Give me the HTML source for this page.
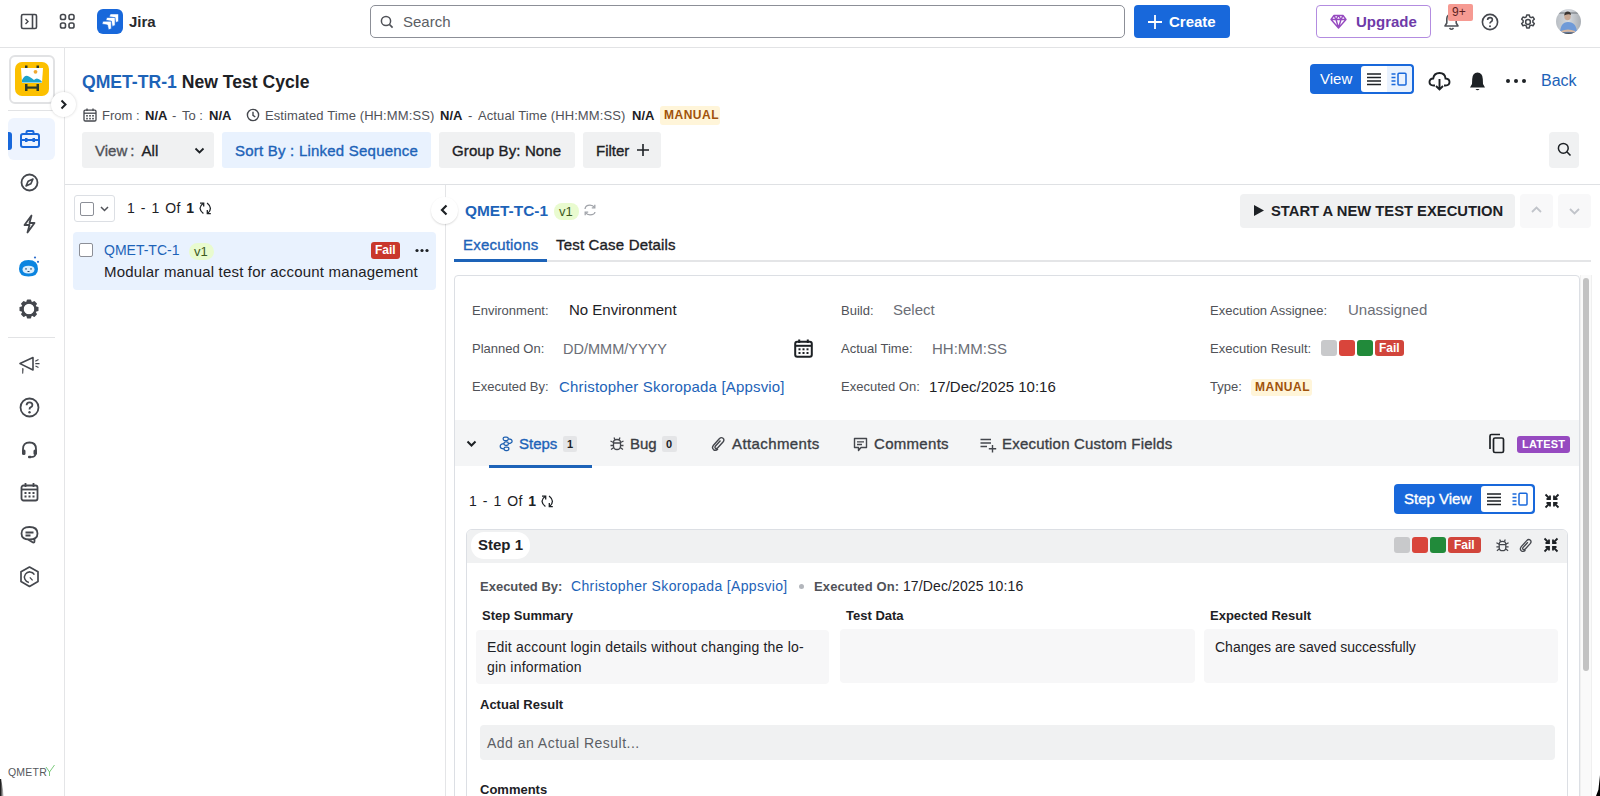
<!DOCTYPE html>
<html><head><meta charset="utf-8">
<style>
*{box-sizing:border-box;margin:0;padding:0}
html,body{width:1600px;height:796px;overflow:hidden;background:#fff;font-family:"Liberation Sans",sans-serif;color:#172b4d}
.a{position:absolute}
.t{position:absolute;white-space:nowrap}
svg{display:block}
.m{-webkit-text-stroke:0.35px currentColor}
</style></head><body>
<!-- TOP BAR -->
<div class="a" style="left:0;top:0;width:1600px;height:48px;background:#fff;border-bottom:1px solid #e2e3e5"></div>


<!-- sidebar toggle icon -->
<svg class="a" style="left:20px;top:13px" width="18" height="17" viewBox="0 0 18 17"><rect x="1.5" y="1.5" width="15" height="14" rx="1.5" fill="none" stroke="#44474d" stroke-width="1.6"/><line x1="12.5" y1="1.5" x2="12.5" y2="15.5" stroke="#44474d" stroke-width="1.6"/><path d="M5.5 6 L8 8.5 L5.5 11" fill="none" stroke="#44474d" stroke-width="1.4"/></svg>
<!-- grid icon -->
<svg class="a" style="left:59px;top:13px" width="17" height="17" viewBox="0 0 17 17"><g fill="none" stroke="#44474d" stroke-width="1.6"><rect x="1.5" y="1.5" width="5" height="5" rx="1.8"/><rect x="10" y="1.5" width="5" height="5" rx="1.8"/><rect x="1.5" y="10" width="5" height="5" rx="1.8"/><rect x="10" y="10" width="5" height="5" rx="1.8"/></g></svg>
<!-- jira logo -->
<div class="a" style="left:97px;top:9px;width:26px;height:25px;border-radius:6px;background:#1868db"></div>
<svg class="a" style="left:97px;top:9px" width="26" height="25" viewBox="0 0 26 25"><g fill="#fff" stroke="#1868db" stroke-width="0.6" stroke-linejoin="miter"><path d="M12.3 7.699999999999999 L13.3 4.9 H21.5 V12.5 L18.700000000000003 13.5 L17.700000000000003 8.7 Z"/><path d="M8.9 11.3 L9.9 8.5 H18.099999999999998 V16.4 L15.299999999999999 17.4 L14.299999999999999 12.3 Z"/><path d="M5 15.0 L6.0 12.2 H14.3 V19.8 L11.5 20.8 L10.5 16.0 Z"/></g></svg>
<div class="t" style="left:129px;top:12px;font-size:15px;font-weight:bold;color:#292a2e;line-height:20px">Jira</div>
<!-- search -->
<div class="a" style="left:370px;top:5px;width:755px;height:33px;border:1px solid #8c8f97;border-radius:5px;background:#fff"></div>
<svg class="a" style="left:380px;top:15px" width="14" height="14" viewBox="0 0 14 14"><circle cx="6" cy="6" r="4.6" fill="none" stroke="#505258" stroke-width="1.5"/><line x1="9.4" y1="9.4" x2="12.6" y2="12.6" stroke="#505258" stroke-width="1.6"/></svg>
<div class="t" style="left:403px;top:12px;font-size:15px;color:#5b5e64;line-height:20px">Search</div>
<!-- create -->
<div class="a" style="left:1134px;top:5px;width:96px;height:33px;border-radius:4px;background:#1868db"></div>
<svg class="a" style="left:1147px;top:14px" width="16" height="16" viewBox="0 0 16 16"><path d="M8 1 V15 M1 8 H15" stroke="#fff" stroke-width="1.8"/></svg>
<div class="t" style="left:1169px;top:12px;font-size:15px;font-weight:bold;color:#fff;line-height:20px">Create</div>
<!-- upgrade -->
<div class="a" style="left:1316px;top:5px;width:115px;height:33px;border:1px solid #b38ce0;border-radius:4px;background:#fff"></div>
<svg class="a" style="left:1330px;top:14px" width="17" height="15" viewBox="0 0 17 15"><path d="M4 1.5 H13 L16 5.5 L8.5 14 L1 5.5 Z M1 5.5 H16 M6 5.5 L8.5 14 L11 5.5 M4 1.5 L6 5.5 L8.5 1.5 L11 5.5 L13 1.5" fill="none" stroke="#964ac0" stroke-width="1.4" stroke-linejoin="round"/></svg>
<div class="t" style="left:1356px;top:12px;font-size:15px;font-weight:bold;color:#6e3aa8;line-height:20px">Upgrade</div>
<!-- bell top -->
<svg class="a" style="left:1443px;top:12px" width="17" height="19" viewBox="0 0 17 19"><path d="M8.5 2 C5.5 2 3.8 4.3 3.8 7 V11 L2 14 H15 L13.2 11 V7 C13.2 4.3 11.5 2 8.5 2 Z M6.5 16 Q8.5 18.5 10.5 16" fill="none" stroke="#505258" stroke-width="1.6" stroke-linejoin="round"/></svg>
<div class="a" style="left:1448px;top:4px;width:25px;height:17px;border-radius:2px;background:#f69a92"></div>
<div class="t" style="left:1452px;top:5px;font-size:12px;color:#5d1f1f;line-height:15px">9+</div>
<!-- help -->
<svg class="a" style="left:1481px;top:13px" width="18" height="18" viewBox="0 0 18 18"><circle cx="9" cy="9" r="7.6" fill="none" stroke="#44474d" stroke-width="1.6"/><path d="M6.6 7 Q6.6 4.6 9 4.6 Q11.4 4.6 11.4 6.8 Q11.4 8.2 9.8 8.9 Q9 9.3 9 10.6" fill="none" stroke="#44474d" stroke-width="1.6"/><circle cx="9" cy="13.2" r="1" fill="#44474d"/></svg>
<!-- settings -->
<svg class="a" style="left:1519px;top:13px" width="18" height="18" viewBox="0 0 24 24"><path fill="none" stroke="#44474d" stroke-width="2" stroke-linejoin="round" d="M10.3 2.5h3.4l.6 2.6 1.9 1.1 2.5-.8 1.7 2.9-1.9 1.8v2.2l1.9 1.8-1.7 2.9-2.5-.8-1.9 1.1-.6 2.6h-3.4l-.6-2.6-1.9-1.1-2.5.8-1.7-2.9 1.9-1.8v-2.2L3.6 8.3l1.7-2.9 2.5.8 1.9-1.1z"/><circle cx="12" cy="12" r="3.2" fill="none" stroke="#44474d" stroke-width="2"/></svg>
<!-- avatar -->
<svg class="a" style="left:1556px;top:9px" width="25" height="25" viewBox="0 0 25 25"><defs><clipPath id="avc"><circle cx="12.5" cy="12.5" r="12.5"/></clipPath><linearGradient id="avg" x1="0" x2="1"><stop offset="0" stop-color="#b9bec4"/><stop offset="0.5" stop-color="#d5d9de"/><stop offset="1" stop-color="#a9aeb4"/></linearGradient></defs><g clip-path="url(#avc)"><rect width="25" height="25" fill="url(#avg)"/><rect x="0" y="3" width="25" height="2" fill="#6d737a" opacity="0.5"/><path d="M4 25 Q4 13 12 13 Q21 13 21 25 Z" fill="#6f9ad8"/><ellipse cx="11.5" cy="7.5" rx="3.2" ry="3.8" fill="#c9a893"/><path d="M8.2 6.5 Q8.5 2.5 11.8 2.5 Q15 2.5 15 6 Q13 4.2 8.2 6.5 Z" fill="#3a3430"/><path d="M5 22 Q12 19 19 22 L19 24 Q12 21.5 5 24 Z" fill="#d8b8a0"/><rect x="0" y="23.5" width="25" height="2" fill="#555"/></g></svg>
<!-- LEFT SIDEBAR -->
<div class="a" style="left:64px;top:47px;width:1px;height:749px;background:#e4e5e7"></div>


<div class="a" style="left:9px;top:55px;width:46px;height:49px;border:2px solid #e1e2e4;border-radius:6px;background:#fff"></div>
<div class="a" style="left:15px;top:62px;width:34px;height:34px;border-radius:7px;background:#fcc000"></div>
<svg class="a" style="left:15px;top:62px" width="34" height="34" viewBox="0 0 34 34"><rect x="10" y="3.5" width="2.5" height="3" fill="#2d3a2a"/><rect x="21.5" y="3.5" width="2.5" height="3" fill="#2d3a2a"/><path d="M6 6 H28 L27 21 H7 Z" fill="#fff"/><path d="M7 18 Q10 12 14 14.5 Q17 16 19 18 Q22 14.5 26.5 19 L27 20.5 H7 Z" fill="#1da3cc"/><circle cx="20.5" cy="9.8" r="1.9" fill="#f0a830"/><rect x="10" y="22" width="2.5" height="7" fill="#2d3a2a"/><rect x="21.5" y="22" width="2.5" height="7" fill="#2d3a2a"/><rect x="10" y="24.5" width="14" height="2.2" fill="#2d3a2a"/></svg>
<div class="a" style="left:8px;top:110px;width:47px;height:1px;background:#e2e3e5"></div>
<div class="a" style="left:51px;top:92px;width:25px;height:25px;border-radius:50%;background:#fff;box-shadow:0 0 3px rgba(0,0,0,0.18)"></div>
<svg class="a" style="left:58px;top:99px" width="11" height="11" viewBox="0 0 11 11"><path d="M3.5 1.5 L7.5 5.5 L3.5 9.5" fill="none" stroke="#1d2125" stroke-width="2"/></svg>
<!-- active -->
<div class="a" style="left:8px;top:118px;width:47px;height:42px;border-radius:6px;background:#eef4fe"></div>
<div class="a" style="left:8px;top:132px;width:4px;height:18px;border-radius:0 3px 3px 0;background:#1868db"></div>
<svg class="a" style="left:19px;top:129px" width="22" height="21" viewBox="0 0 22 21"><g fill="none" stroke="#1868db" stroke-width="2"><rect x="2" y="5" width="18" height="13" rx="2"/><path d="M7.5 5 V3 Q7.5 2 8.5 2 H13.5 Q14.5 2 14.5 3 V5"/><path d="M2 11 H20"/></g><rect x="6" y="9" width="2.5" height="4" fill="#1868db"/><rect x="13.5" y="9" width="2.5" height="4" fill="#1868db"/></svg>
<!-- compass -->
<svg class="a" style="left:20px;top:173px" width="19" height="19" viewBox="0 0 19 19"><circle cx="9.5" cy="9.5" r="8" fill="none" stroke="#44474d" stroke-width="1.8"/><path d="M13 6 L10.8 10.8 L6 13 L8.2 8.2 Z" fill="none" stroke="#44474d" stroke-width="1.6" stroke-linejoin="round"/></svg>
<!-- lightning -->
<svg class="a" style="left:21px;top:214px" width="17" height="20" viewBox="0 0 17 20"><path d="M10.5 1.5 L3.5 11 H8.5 L6.5 18.5 L13.5 9 H8.5 Z" fill="none" stroke="#44474d" stroke-width="1.8" stroke-linejoin="round"/></svg>
<!-- robot -->
<svg class="a" style="left:17px;top:255px" width="24" height="23" viewBox="0 0 24 23"><path d="M2 14 Q2 5 11.5 5 Q21 5 21 14 Q21 21.5 11.5 21.5 Q2 21.5 2 14 Z" fill="#0b84e0"/><path d="M5.5 14.5 Q5.5 10.8 11.5 10.8 Q17.5 10.8 17.5 14.5 Q17.5 18.5 11.5 18.5 Q5.5 18.5 5.5 14.5 Z" fill="#d8ecfc"/><rect x="8.3" y="13.2" width="1.4" height="1.4" fill="#2a4a6a"/><rect x="13.3" y="13.2" width="1.4" height="1.4" fill="#2a4a6a"/><rect x="10.5" y="16" width="2" height="1" fill="#2a4a6a"/><circle cx="18" cy="2.5" r="1.1" fill="#2e6fcc"/><circle cx="21" cy="6.8" r="1.1" fill="#2e6fcc"/></svg>
<!-- gear -->
<svg class="a" style="left:19px;top:299px" width="20" height="20" viewBox="0 0 20 20"><g fill="#44474d" transform="translate(10 10)"><rect x="-2.2" y="-9.5" width="4.4" height="4" rx="0.8"/><rect x="-2.2" y="-9.5" width="4.4" height="4" rx="0.8" transform="rotate(45)"/><rect x="-2.2" y="-9.5" width="4.4" height="4" rx="0.8" transform="rotate(90)"/><rect x="-2.2" y="-9.5" width="4.4" height="4" rx="0.8" transform="rotate(135)"/><rect x="-2.2" y="-9.5" width="4.4" height="4" rx="0.8" transform="rotate(180)"/><rect x="-2.2" y="-9.5" width="4.4" height="4" rx="0.8" transform="rotate(225)"/><rect x="-2.2" y="-9.5" width="4.4" height="4" rx="0.8" transform="rotate(270)"/><rect x="-2.2" y="-9.5" width="4.4" height="4" rx="0.8" transform="rotate(315)"/></g><circle cx="10" cy="10" r="6.6" fill="none" stroke="#44474d" stroke-width="2.6"/></svg>
<div class="a" style="left:8px;top:337px;width:47px;height:1px;background:#e2e3e5"></div>
<!-- megaphone -->
<svg class="a" style="left:18px;top:354px" width="24" height="22" viewBox="0 0 24 22"><path d="M2 9.6 L15 3.6 V16 Z" fill="none" stroke="#44474d" stroke-width="1.6" stroke-linejoin="round"/><path d="M4.2 14 L5.6 14.6 L5.2 19.5 L4.2 19.8 Z" fill="#44474d"/><path d="M17.3 7.3 L20.5 5.5 M17.3 9.6 H21.5 M17.5 12 L20.5 13.5" stroke="#44474d" stroke-width="1.2"/></svg>
<!-- help -->
<svg class="a" style="left:19px;top:397px" width="21" height="21" viewBox="0 0 21 21"><circle cx="10.5" cy="10.5" r="9" fill="none" stroke="#44474d" stroke-width="1.8"/><path d="M7.6 8.2 Q7.6 5.3 10.5 5.3 Q13.4 5.3 13.4 7.9 Q13.4 9.6 11.5 10.4 Q10.5 10.9 10.5 12.4" fill="none" stroke="#44474d" stroke-width="1.8"/><circle cx="10.5" cy="15.3" r="1.2" fill="#44474d"/></svg>
<!-- headset -->
<svg class="a" style="left:20px;top:440px" width="19" height="19" viewBox="0 0 19 19"><path d="M3 11 V9 Q3 2.5 9.5 2.5 Q16 2.5 16 9 V11" fill="none" stroke="#44474d" stroke-width="1.8"/><rect x="2" y="9.5" width="3.5" height="5.5" rx="1.5" fill="#44474d"/><rect x="13.5" y="9.5" width="3.5" height="5.5" rx="1.5" fill="#44474d"/><path d="M15.5 14.5 Q15 17 11 17" fill="none" stroke="#44474d" stroke-width="1.6"/><rect x="8" y="15.8" width="3.5" height="2.4" rx="1" fill="#44474d"/></svg>
<!-- calendar -->
<svg class="a" style="left:20px;top:482px" width="19" height="20" viewBox="0 0 19 20"><rect x="1.5" y="3.5" width="16" height="15" rx="2" fill="none" stroke="#44474d" stroke-width="1.8"/><path d="M1.5 7.5 H17.5" stroke="#44474d" stroke-width="1.8"/><path d="M5.5 1 V5 M13.5 1 V5" stroke="#44474d" stroke-width="1.8"/><g fill="#44474d"><rect x="4.5" y="10" width="2" height="2"/><rect x="8.5" y="10" width="2" height="2"/><rect x="12.5" y="10" width="2" height="2"/><rect x="4.5" y="13.5" width="2" height="2"/><rect x="8.5" y="13.5" width="2" height="2"/><rect x="12.5" y="13.5" width="2" height="2"/></g></svg>
<!-- chat -->
<svg class="a" style="left:19px;top:525px" width="21" height="19" viewBox="0 0 21 19"><path d="M10.5 2 Q18.5 2 18.5 8.5 Q18.5 14.5 10.5 14.5 H9 L14 17.5 Q15.5 18 15.5 16 V14 M10.5 14.5 Q2.5 14.5 2.5 8.5 Q2.5 2 10.5 2" fill="none" stroke="#44474d" stroke-width="1.8" stroke-linejoin="round"/><path d="M6.5 7.5 H14.5 M6.5 10.5 H11.5" stroke="#44474d" stroke-width="1.8"/></svg>
<!-- shield -->
<svg class="a" style="left:19px;top:566px" width="21" height="22" viewBox="0 0 21 22"><path d="M10.5 1 L19 5.8 V15.6 L10.5 20.5 L2 15.6 V5.8 Z" fill="none" stroke="#44474d" stroke-width="1.7" stroke-linejoin="round"/><path d="M15.4 8.55 A5.3 5.3 0 1 0 9.9 16.4" fill="none" stroke="#44474d" stroke-width="1.5"/><path d="M10.8 11.4 L13.6 14.4" stroke="#44474d" stroke-width="1.2"/></svg>
<!-- qmetry logo -->
<div class="t" style="left:8px;top:766px;font-size:10.5px;color:#55585d;letter-spacing:0.2px;line-height:12px">QMETR</div>
<svg class="a" style="left:45px;top:764px" width="12" height="14" viewBox="0 0 12 14"><path d="M1 3 L4.5 8 V12 M4.5 8 L9.5 1" fill="none" stroke="#6cc46c" stroke-width="0.9"/></svg>

<!-- HEADER -->

<div class="t" style="left:82px;top:71px;font-size:17.6px;font-weight:bold;line-height:22px;color:#1d63b8">QMET-TR-1 <span style="color:#1d2125">New Test Cycle</span></div>
<!-- meta line -->
<svg class="a" style="left:83px;top:108px" width="14" height="14" viewBox="0 0 14 14"><rect x="1" y="2.2" width="12" height="10.8" rx="1.3" fill="none" stroke="#44474d" stroke-width="1.3"/><path d="M1 5.2 H13" stroke="#44474d" stroke-width="1.3"/><path d="M4 0.5 V3 M10 0.5 V3" stroke="#44474d" stroke-width="1.3"/><g fill="#44474d"><rect x="3.2" y="7" width="1.6" height="1.6"/><rect x="6.2" y="7" width="1.6" height="1.6"/><rect x="9.2" y="7" width="1.6" height="1.6"/><rect x="3.2" y="9.8" width="1.6" height="1.6"/><rect x="6.2" y="9.8" width="1.6" height="1.6"/><rect x="9.2" y="9.8" width="1.6" height="1.6"/></g></svg>
<div class="t" style="left:102px;top:108px;font-size:13px;line-height:15px;color:#505258">From :</div>
<div class="t" style="left:145px;top:108px;font-size:13px;line-height:15px;color:#1d2125;font-weight:bold">N/A</div>
<div class="t" style="left:172px;top:108px;font-size:13px;line-height:15px;color:#505258">-</div>
<div class="t" style="left:182px;top:108px;font-size:13px;line-height:15px;color:#505258">To :</div>
<div class="t" style="left:209px;top:108px;font-size:13px;line-height:15px;color:#1d2125;font-weight:bold">N/A</div>
<svg class="a" style="left:246px;top:108px" width="14" height="14" viewBox="0 0 14 14"><circle cx="7" cy="7" r="5.6" fill="none" stroke="#44474d" stroke-width="1.4"/><path d="M7 3.8 V7.3 L9.3 9" fill="none" stroke="#44474d" stroke-width="1.4"/></svg>
<div class="t" style="left:265px;top:108px;font-size:13px;line-height:15px;color:#505258;letter-spacing:0.1px">Estimated Time (HH:MM:SS)</div>
<div class="t" style="left:440px;top:108px;font-size:13px;line-height:15px;color:#1d2125;font-weight:bold">N/A</div>
<div class="t" style="left:468px;top:108px;font-size:13px;line-height:15px;color:#505258">-</div>
<div class="t" style="left:478px;top:108px;font-size:13px;line-height:15px;color:#505258;letter-spacing:0.1px">Actual Time (HH:MM:SS)</div>
<div class="t" style="left:632px;top:108px;font-size:13px;line-height:15px;color:#1d2125;font-weight:bold">N/A</div>
<div class="a" style="left:660px;top:106px;width:60px;height:19px;border-radius:3px;background:#fff5d9"></div>
<div class="t" style="left:664px;top:108px;font-size:12px;line-height:15px;color:#a0520a;font-weight:bold;letter-spacing:0.5px">MANUAL</div>
<!-- toolbar -->
<div class="a" style="left:82px;top:132px;width:132px;height:36px;border-radius:3px;background:#f0f1f2"></div>
<div class="t m" style="left:95px;top:142px;font-size:15px;line-height:18px;color:#505258">View<span style="margin:0 0 0 3px">:</span> <span class="m" style="color:#1d2125;margin-left:3px">All</span></div>
<svg class="a" style="left:194px;top:146px" width="11" height="10" viewBox="0 0 11 10"><path d="M1.5 2.5 L5.5 6.5 L9.5 2.5" fill="none" stroke="#1d2125" stroke-width="1.8"/></svg>
<div class="a" style="left:222px;top:132px;width:209px;height:36px;border-radius:3px;background:#e9f2fe"></div>
<div class="t m" style="left:235px;top:142px;font-size:15px;line-height:18px;color:#1d63b8;letter-spacing:0.22px">Sort By : Linked Sequence</div>
<div class="a" style="left:439px;top:132px;width:136px;height:36px;border-radius:3px;background:#f0f1f2"></div>
<div class="t m" style="left:452px;top:142px;font-size:15px;line-height:18px;color:#1d2125;letter-spacing:0.12px">Group By: None</div>
<div class="a" style="left:583px;top:132px;width:78px;height:36px;border-radius:3px;background:#f0f1f2"></div>
<div class="t m" style="left:596px;top:142px;font-size:15px;line-height:18px;color:#1d2125">Filter</div>
<svg class="a" style="left:636px;top:143px" width="14" height="14" viewBox="0 0 14 14"><path d="M7 1 V13 M1 7 H13" stroke="#1d2125" stroke-width="1.6"/></svg>
<!-- right header -->
<div class="a" style="left:1310px;top:64px;width:104px;height:30px;border-radius:4px;background:#1868db"></div>
<div class="t" style="left:1320px;top:70px;font-size:15px;line-height:18px;color:#fff">View</div>
<div class="a" style="left:1361px;top:66px;width:51px;height:26px;border-radius:3px;background:#fff;overflow:hidden"><div class="a" style="left:26px;top:0;width:25px;height:26px;background:#e9f2fe"></div></div>
<svg class="a" style="left:1366px;top:72px" width="16" height="14" viewBox="0 0 16 14"><path d="M1 2 H15 M1 5.5 H15 M1 9 H15 M1 12.5 H15" stroke="#1d2125" stroke-width="1.5"/></svg>
<svg class="a" style="left:1391px;top:72px" width="16" height="14" viewBox="0 0 16 14"><path d="M0.5 2 H4.5 M0.5 5.5 H4.5 M0.5 9 H4.5 M0.5 12.5 H4.5" stroke="#1868db" stroke-width="1.4"/><rect x="7" y="1.2" width="8" height="11.8" rx="1" fill="none" stroke="#1868db" stroke-width="1.5"/></svg>
<!-- cloud -->
<svg class="a" style="left:1428px;top:71px" width="23" height="21" viewBox="0 0 23 21"><path d="M7 14.5 H5.5 Q1.5 14.5 1.5 11 Q1.5 7.5 5.2 7.5 Q6 2 11.5 2 Q17 2 17.5 7.5 Q21.5 7.8 21.5 11 Q21.5 14.5 17.5 14.5 H16" fill="none" stroke="#1d2125" stroke-width="1.9"/><path d="M11.5 8 V18.5 M8 15 L11.5 18.5 L15 15" fill="none" stroke="#1d2125" stroke-width="1.9"/></svg>
<!-- bell filled -->
<svg class="a" style="left:1469px;top:71px" width="17" height="21" viewBox="0 0 17 21"><path d="M8.5 1.5 Q3.5 1.5 3.2 8 L3 13 L1 16.5 H16 L14 13 L13.8 8 Q13.5 1.5 8.5 1.5 Z" fill="#1d2125"/><path d="M6.5 18 Q8.5 20.5 10.5 18 Z" fill="#1d2125"/></svg>
<!-- dots -->
<svg class="a" style="left:1505px;top:77px" width="22" height="8" viewBox="0 0 22 8"><circle cx="3" cy="4" r="2" fill="#1d2125"/><circle cx="11" cy="4" r="2" fill="#1d2125"/><circle cx="19" cy="4" r="2" fill="#1d2125"/></svg>
<div class="t" style="left:1541px;top:71px;font-size:16px;line-height:20px;color:#1d63b8">Back</div>
<div class="a" style="left:1549px;top:132px;width:30px;height:36px;border-radius:4px;background:#f0f1f2"></div>
<svg class="a" style="left:1557px;top:142px" width="15" height="15" viewBox="0 0 15 15"><circle cx="6.3" cy="6.3" r="4.9" fill="none" stroke="#1d2125" stroke-width="1.5"/><line x1="9.8" y1="9.8" x2="13.5" y2="13.5" stroke="#1d2125" stroke-width="1.6"/></svg>

<div class="a" style="left:65px;top:184px;width:1535px;height:1px;background:#dfe1e4"></div>
<div class="a" style="left:445px;top:185px;width:1px;height:611px;background:#e4e5e7"></div>


<!-- LEFT PANEL -->
<div class="a" style="left:74px;top:195px;width:41px;height:27px;border:1px solid #dcdfe4;border-radius:3px;background:#fff"></div>
<div class="a" style="left:80px;top:202px;width:14px;height:14px;border:1.5px solid #8c8f97;border-radius:2px;background:#fff"></div>
<svg class="a" style="left:99px;top:204px" width="11" height="10" viewBox="0 0 11 10"><path d="M2 3 L5.5 6.5 L9 3" fill="none" stroke="#505258" stroke-width="1.5"/></svg>
<div class="t" style="left:127px;top:200px;font-size:14px;line-height:17px;color:#1d2125;word-spacing:1.5px;letter-spacing:0.3px">1 - 1 Of <b>1</b></div>
<svg class="a" style="left:199px;top:202px" width="14" height="14" viewBox="0 0 14 14" style="overflow:visible"><g fill="none" stroke="#1d2125" stroke-width="1.3"><path d="M4.3 1.3 Q-2.3 6.3 4.4 11.5"/><path d="M1 1.1 H4.7 V4.5"/><path d="M8.1 1.1 Q14.5 6.3 8.6 11.5"/><path d="M8.3 8 V11.6 H11.8"/></g></svg>
<div class="a" style="left:73px;top:232px;width:363px;height:58px;border-radius:4px;background:#e9f2fe"></div>
<div class="a" style="left:79px;top:243px;width:14px;height:14px;border:1.5px solid #8c8f97;border-radius:2px;background:#fff"></div>
<div class="t" style="left:104px;top:242px;font-size:14px;line-height:17px;color:#1d63b8">QMET-TC-1</div>
<div class="a" style="left:189px;top:243px;width:25px;height:17px;border-radius:8.5px;background:#e9fbcf"></div>
<div class="t" style="left:194px;top:244px;font-size:13px;line-height:16px;color:#3d5a1e">v1</div>
<div class="a" style="left:371px;top:242px;width:29px;height:17px;border-radius:3px;background:#c9372c"></div>
<div class="t" style="left:375px;top:243px;font-size:12px;line-height:15px;color:#fff;font-weight:bold">Fail</div>
<svg class="a" style="left:415px;top:248px" width="14" height="5" viewBox="0 0 14 5"><circle cx="2" cy="2.5" r="1.6" fill="#1d2125"/><circle cx="7" cy="2.5" r="1.6" fill="#1d2125"/><circle cx="12" cy="2.5" r="1.6" fill="#1d2125"/></svg>
<div class="t" style="left:104px;top:263px;font-size:15px;letter-spacing:0.19px;line-height:18px;color:#1d2125">Modular manual test for account management</div>
<!-- collapse circle -->
<div class="a" style="left:431px;top:197px;width:27px;height:27px;border-radius:50%;background:#fff;box-shadow:0 1px 2px rgba(0,0,0,0.15)"></div>
<svg class="a" style="left:439px;top:204px" width="11" height="12" viewBox="0 0 11 12"><path d="M7.5 1.5 L3 6 L7.5 10.5" fill="none" stroke="#1d2125" stroke-width="2.2"/></svg>


<!-- RIGHT PANEL -->
<div class="t" style="left:465px;top:201px;font-size:15.4px;font-weight:bold;line-height:19px;color:#1d63b8">QMET-TC-1</div>
<div class="a" style="left:554px;top:203px;width:25px;height:17px;border-radius:8px;background:#e9fbcf"></div>
<div class="t" style="left:559px;top:204px;font-size:13px;line-height:16px;color:#3d5a1e">v1</div>
<svg class="a" style="left:583px;top:203px" width="14" height="14" viewBox="0 0 14 14"><g fill="none" stroke="#a0a3a9" stroke-width="1.3"><path d="M2 6 Q2.5 2.2 7 2.2 Q10 2.2 11.5 4.5"/><path d="M12 9 Q11.5 11.8 7 11.8 Q4 11.8 2.5 9.5"/><path d="M11.8 1.8 V4.8 H8.8"/><path d="M2.2 12.2 V9.2 H5.2"/></g></svg>
<div class="t m" style="left:463px;top:236px;font-size:15px;line-height:18px;color:#1d63b8;letter-spacing:0.2px">Executions</div>
<div class="t m" style="left:556px;top:236px;font-size:15px;line-height:18px;color:#1d2125;letter-spacing:0.18px">Test Case Details</div>
<div class="a" style="left:454px;top:260px;width:1137px;height:2px;background:#e4e5e7"></div>
<div class="a" style="left:454px;top:259px;width:93px;height:3px;background:#1d63b8"></div>
<!-- start execution -->
<div class="a" style="left:1240px;top:194px;width:275px;height:34px;border-radius:4px;background:#f0f1f2"></div>
<svg class="a" style="left:1253px;top:204px" width="12" height="13" viewBox="0 0 12 13"><path d="M1 1 L11 6.5 L1 12 Z" fill="#1d2125"/></svg>
<div class="t" style="left:1271px;top:202px;font-size:14.75px;font-weight:bold;line-height:18px;color:#1d2125">START A NEW TEST EXECUTION</div>
<div class="a" style="left:1520px;top:194px;width:33px;height:34px;border-radius:4px;background:#f8f8f9"></div>
<svg class="a" style="left:1530px;top:205px" width="13" height="10" viewBox="0 0 13 10"><path d="M2 7 L6.5 2.5 L11 7" fill="none" stroke="#c1c4ca" stroke-width="1.8"/></svg>
<div class="a" style="left:1558px;top:194px;width:33px;height:34px;border-radius:4px;background:#f8f8f9"></div>
<svg class="a" style="left:1568px;top:206px" width="13" height="10" viewBox="0 0 13 10"><path d="M2 3 L6.5 7.5 L11 3" fill="none" stroke="#c1c4ca" stroke-width="1.8"/></svg>
<!-- scrollbar -->
<div class="a" style="left:1580px;top:275px;width:12px;height:521px;background:#fafafa;border-left:1px solid #f0f0f0;border-right:1px solid #f0f0f0"></div>
<div class="a" style="left:1583px;top:278px;width:6px;height:393px;border-radius:3px;background:#c2c2c2"></div>
<!-- exec box -->
<div class="a" style="left:454px;top:275px;width:1126px;height:540px;border:1px solid #dcdfe4;border-radius:4px;background:#fff"></div>


<!-- fields -->
<div class="t" style="left:472px;top:303px;font-size:13px;line-height:16px;color:#505258">Environment:</div>
<div class="t" style="left:569px;top:301px;font-size:15px;line-height:18px;color:#1d2125">No Environment</div>
<div class="t" style="left:472px;top:341px;font-size:13px;line-height:16px;color:#505258">Planned On:</div>
<div class="t" style="left:563px;top:340px;font-size:15px;line-height:18px;color:#6b6e76;font-size:14.5px">DD/MMM/YYYY</div>
<svg class="a" style="left:794px;top:339px" width="19" height="19" viewBox="0 0 19 19"><rect x="1.2" y="2.8" width="16.6" height="15" rx="2" fill="none" stroke="#1d2125" stroke-width="2"/><path d="M1.2 6.8 H17.8" stroke="#1d2125" stroke-width="2"/><path d="M5.2 0.5 V4 M13.8 0.5 V4" stroke="#1d2125" stroke-width="2"/><g fill="#1d2125"><rect x="4.5" y="9.3" width="2" height="2"/><rect x="8.5" y="9.3" width="2" height="2"/><rect x="12.5" y="9.3" width="2" height="2"/><rect x="4.5" y="13" width="2" height="2"/><rect x="8.5" y="13" width="2" height="2"/><rect x="12.5" y="13" width="2" height="2"/></g></svg>
<div class="t" style="left:472px;top:379px;font-size:13px;line-height:16px;color:#505258">Executed By:</div>
<div class="t" style="left:559px;top:378px;font-size:15px;line-height:18px;color:#1d63b8;letter-spacing:0.18px">Christopher Skoropada [Appsvio]</div>
<div class="t" style="left:841px;top:303px;font-size:13px;line-height:16px;color:#505258">Build:</div>
<div class="t" style="left:893px;top:301px;font-size:15px;line-height:18px;color:#6b6e76">Select</div>
<div class="t" style="left:841px;top:341px;font-size:13px;line-height:16px;color:#505258">Actual Time:</div>
<div class="t" style="left:932px;top:340px;font-size:15px;line-height:18px;color:#6b6e76">HH:MM:SS</div>
<div class="t" style="left:841px;top:379px;font-size:13px;line-height:16px;color:#505258">Executed On:</div>
<div class="t" style="left:929px;top:378px;font-size:15px;line-height:18px;color:#1d2125">17/Dec/2025 10:16</div>
<div class="t" style="left:1210px;top:303px;font-size:13px;line-height:16px;color:#505258">Execution Assignee:</div>
<div class="t" style="left:1348px;top:301px;font-size:15px;line-height:18px;color:#6b6e76">Unassigned</div>
<div class="t" style="left:1210px;top:341px;font-size:13px;line-height:16px;color:#505258">Execution Result:</div>
<div class="a" style="left:1321px;top:340px;width:16px;height:16px;border-radius:3px;background:#c8c9cb"></div>
<div class="a" style="left:1339px;top:340px;width:16px;height:16px;border-radius:3px;background:#d9453b"></div>
<div class="a" style="left:1357px;top:340px;width:16px;height:16px;border-radius:3px;background:#218a3a"></div>
<div class="a" style="left:1375px;top:340px;width:29px;height:16px;border-radius:3px;background:#d1453b"></div>
<div class="t" style="left:1379px;top:341px;font-size:12px;line-height:14px;color:#fff;font-weight:bold">Fail</div>
<div class="t" style="left:1210px;top:379px;font-size:13px;line-height:16px;color:#505258">Type:</div>
<div class="a" style="left:1251px;top:379px;width:61px;height:17px;border-radius:3px;background:#fff5d9"></div>
<div class="t" style="left:1255px;top:380px;font-size:12px;line-height:15px;color:#a0520a;font-weight:bold;letter-spacing:0.5px">MANUAL</div>
<!-- tabs bar -->
<div class="a" style="left:455px;top:420px;width:1124px;height:46px;background:#f4f5f6"></div>
<svg class="a" style="left:466px;top:439px" width="11" height="10" viewBox="0 0 11 10"><path d="M1.5 2.5 L5.5 6.5 L9.5 2.5" fill="none" stroke="#1d2125" stroke-width="2"/></svg>
<svg class="a" style="left:498px;top:436px" width="16" height="16" viewBox="0 0 16 16"><g fill="none" stroke="#1d5fb0" stroke-width="1.25"><rect x="5.1" y="1" width="5.2" height="3.6" rx="1.8"/><rect x="5.9" y="5.9" width="4.5" height="3.5" rx="1.75"/><rect x="6" y="11" width="4.9" height="3.5" rx="1.75"/><path d="M10.3 2.8 C15.35 2.8 15.35 7.6 10.4 7.6"/><path d="M5.9 7.6 C0.95 7.6 0.95 12.8 6 12.8"/></g></svg>
<div class="t m" style="left:519px;top:435px;font-size:15px;line-height:18px;color:#1d63b8">Steps</div>
<div class="a" style="left:563px;top:436px;width:14px;height:16px;border-radius:2px;background:#e4e5e7"></div>
<div class="t" style="left:567px;top:437px;font-size:11px;line-height:14px;color:#1d2125;font-weight:bold">1</div>
<div class="a" style="left:489px;top:465px;width:103px;height:2.5px;background:#1d63b8"></div>
<svg class="a" style="left:609px;top:436px" width="16" height="16" viewBox="0 0 16 16"><g fill="none" stroke="#44474d" stroke-width="1.3"><path d="M4.5 6.5 Q4.5 3.5 8 3.5 Q11.5 3.5 11.5 6.5 V10 Q11.5 13.5 8 13.5 Q4.5 13.5 4.5 10 Z"/><path d="M4.5 7 H11.5 M6 3.8 L5 1.5 M10 3.8 L11 1.5 M4.5 6.5 L1.5 5 M11.5 6.5 L14.5 5 M4.5 9.5 H1.5 M11.5 9.5 H14.5 M4.8 11.5 L2 13.5 M11.2 11.5 L14 13.5"/></g></svg>
<div class="t m" style="left:630px;top:435px;font-size:15px;line-height:18px;color:#3b3e44">Bug</div>
<div class="a" style="left:662px;top:436px;width:15px;height:16px;border-radius:2px;background:#e4e5e7"></div>
<div class="t" style="left:666px;top:437px;font-size:11px;line-height:14px;color:#1d2125;font-weight:bold">0</div>
<svg class="a" style="left:710px;top:436px" width="16" height="16" viewBox="0 0 16 16"><path d="M10.5 4.5 L5.5 10 Q4.3 11.5 5.5 12.3 Q6.7 13 7.8 11.8 L13 6 Q14.8 3.8 13 2.2 Q11.2 0.8 9.3 2.8 L3.5 9.2 Q1.5 11.8 3.5 13.6 Q5.6 15.3 8 13" fill="none" stroke="#44474d" stroke-width="1.4"/></svg>
<div class="t m" style="left:732px;top:435px;font-size:15px;line-height:18px;color:#3b3e44;letter-spacing:0.4px">Attachments</div>
<svg class="a" style="left:853px;top:437px" width="15" height="15" viewBox="0 0 15 15"><path d="M1.5 1.5 H13.5 V10.5 H8 L5.5 13.5 V10.5 H1.5 Z" fill="none" stroke="#44474d" stroke-width="1.4" stroke-linejoin="round"/><path d="M4 4.8 H11 M4 7.5 H9" stroke="#44474d" stroke-width="1.3"/></svg>
<div class="t m" style="left:874px;top:435px;font-size:15px;line-height:18px;color:#3b3e44;letter-spacing:0.3px">Comments</div>
<svg class="a" style="left:980px;top:437px" width="18" height="16" viewBox="0 0 18 16"><path d="M0.5 2.5 H11 M0.5 6 H11 M0.5 9.5 H7" stroke="#44474d" stroke-width="1.4"/><path d="M12.5 8 V15.5 M8.8 11.8 H16.2" stroke="#44474d" stroke-width="1.4"/></svg>
<div class="t m" style="left:1002px;top:435px;font-size:15px;line-height:18px;color:#3b3e44;letter-spacing:0.2px">Execution Custom Fields</div>
<svg class="a" style="left:1487px;top:433px" width="18" height="21" viewBox="0 0 18 21"><path d="M3 16 V3 Q3 1.5 4.5 1.5 H13" fill="none" stroke="#1d2125" stroke-width="1.7"/><rect x="6.5" y="5" width="10" height="14.5" rx="1.5" fill="none" stroke="#1d2125" stroke-width="1.7"/></svg>
<div class="a" style="left:1517px;top:436px;width:53px;height:17px;border-radius:3px;background:#964ac0"></div>
<div class="t" style="left:1522px;top:437px;font-size:11px;line-height:15px;color:#fff;font-weight:bold;letter-spacing:0.2px">LATEST</div>
<!-- step view row -->
<div class="t" style="left:469px;top:493px;font-size:14px;line-height:17px;color:#1d2125;word-spacing:1.5px;letter-spacing:0.3px">1 - 1 Of <b>1</b></div>
<svg class="a" style="left:541px;top:495px" width="14" height="14" viewBox="0 0 14 14" style="overflow:visible"><g fill="none" stroke="#1d2125" stroke-width="1.3"><path d="M4.3 1.3 Q-2.3 6.3 4.4 11.5"/><path d="M1 1.1 H4.7 V4.5"/><path d="M8.1 1.1 Q14.5 6.3 8.6 11.5"/><path d="M8.3 8 V11.6 H11.8"/></g></svg>
<div class="a" style="left:1394px;top:484px;width:141px;height:30px;border-radius:4px;background:#1868db"></div>
<div class="t m" style="left:1404px;top:490px;font-size:15px;line-height:18px;color:#fff">Step View</div>
<div class="a" style="left:1481px;top:486px;width:52px;height:26px;border-radius:3px;background:#fff"></div>
<svg class="a" style="left:1486px;top:492px" width="16" height="14" viewBox="0 0 16 14"><path d="M1 2 H15 M1 5.5 H15 M1 9 H15 M1 12.5 H15" stroke="#1d2125" stroke-width="1.5"/></svg>
<svg class="a" style="left:1512px;top:492px" width="16" height="14" viewBox="0 0 16 14"><path d="M0.5 2 H4.5 M0.5 5.5 H4.5 M0.5 9 H4.5 M0.5 12.5 H4.5" stroke="#1868db" stroke-width="1.4"/><rect x="7" y="1.2" width="8" height="11.8" rx="1" fill="none" stroke="#1868db" stroke-width="1.5"/></svg>
<svg class="a" style="left:1544px;top:493px" width="16" height="16" viewBox="0 0 16 16"><g fill="none" stroke="#1d2125" stroke-width="1.8"><path d="M1.5 1.5 L6 6 M6 2.5 V6 H2.5"/><path d="M14.5 1.5 L10 6 M10 2.5 V6 H13.5"/><path d="M1.5 14.5 L6 10 M6 13.5 V10 H2.5"/><path d="M14.5 14.5 L10 10 M10 13.5 V10 H13.5"/></g></svg>


<!-- step card -->
<div class="a" style="left:466px;top:529px;width:1102px;height:300px;border:1px solid #dcdfe4;border-radius:6px;background:#fff;overflow:hidden"><div class="a" style="left:0;top:0;width:1100px;height:33px;background:#f0f1f2"></div></div>
<div class="a" style="left:471px;top:532px;width:59px;height:27px;border-radius:13px;background:#fff"></div>
<div class="t" style="left:478px;top:536px;font-size:15px;font-weight:bold;line-height:18px;color:#1d2125">Step 1</div>
<div class="a" style="left:1394px;top:537px;width:16px;height:16px;border-radius:3px;background:#c8c9cb"></div>
<div class="a" style="left:1412px;top:537px;width:16px;height:16px;border-radius:3px;background:#d9453b"></div>
<div class="a" style="left:1430px;top:537px;width:16px;height:16px;border-radius:3px;background:#218a3a"></div>
<div class="a" style="left:1448px;top:537px;width:33px;height:16px;border-radius:3px;background:#d1453b"></div>
<div class="t" style="left:1454px;top:538px;font-size:12px;line-height:14px;color:#fff;font-weight:bold">Fail</div>
<svg class="a" style="left:1495px;top:538px" width="15" height="15" viewBox="0 0 16 16"><g fill="none" stroke="#44474d" stroke-width="1.3"><path d="M4.5 6.5 Q4.5 3.5 8 3.5 Q11.5 3.5 11.5 6.5 V10 Q11.5 13.5 8 13.5 Q4.5 13.5 4.5 10 Z"/><path d="M4.5 7 H11.5 M6 3.8 L5 1.5 M10 3.8 L11 1.5 M4.5 6.5 L1.5 5 M11.5 6.5 L14.5 5 M4.5 9.5 H1.5 M11.5 9.5 H14.5 M4.8 11.5 L2 13.5 M11.2 11.5 L14 13.5"/></g></svg>
<svg class="a" style="left:1518px;top:538px" width="15" height="15" viewBox="0 0 16 16"><path d="M10.5 4.5 L5.5 10 Q4.3 11.5 5.5 12.3 Q6.7 13 7.8 11.8 L13 6 Q14.8 3.8 13 2.2 Q11.2 0.8 9.3 2.8 L3.5 9.2 Q1.5 11.8 3.5 13.6 Q5.6 15.3 8 13" fill="none" stroke="#44474d" stroke-width="1.4"/></svg>
<svg class="a" style="left:1543px;top:537px" width="16" height="16" viewBox="0 0 16 16"><g fill="none" stroke="#1d2125" stroke-width="1.8"><path d="M1.5 1.5 L6 6 M6 2.5 V6 H2.5"/><path d="M14.5 1.5 L10 6 M10 2.5 V6 H13.5"/><path d="M1.5 14.5 L6 10 M6 13.5 V10 H2.5"/><path d="M14.5 14.5 L10 10 M10 13.5 V10 H13.5"/></g></svg>
<div class="t" style="left:480px;top:579px;font-size:13px;font-weight:bold;line-height:15px;color:#505258">Executed By:</div>
<div class="t" style="left:571px;top:578px;font-size:14px;line-height:17px;color:#1d63b8;letter-spacing:0.36px">Christopher Skoropada [Appsvio]</div>
<div class="a" style="left:799px;top:584px;width:5px;height:5px;border-radius:50%;background:#b3b6bc"></div>
<div class="t" style="left:814px;top:579px;font-size:13px;font-weight:bold;line-height:15px;color:#505258;letter-spacing:0.12px">Executed On: <span style="font-weight:normal;font-size:14px;color:#1d2125">17/Dec/2025 10:16</span></div>
<div class="t" style="left:482px;top:608px;font-size:13px;font-weight:bold;line-height:15px;color:#1d2125">Step Summary</div>
<div class="t" style="left:846px;top:608px;font-size:13px;font-weight:bold;line-height:15px;color:#1d2125">Test Data</div>
<div class="t" style="left:1210px;top:608px;font-size:13px;font-weight:bold;line-height:15px;color:#1d2125">Expected Result</div>
<div class="a" style="left:476px;top:630px;width:353px;height:54px;border-radius:4px;background:#f7f7f8"></div>
<div class="a" style="left:840px;top:629px;width:355px;height:54px;border-radius:4px;background:#f7f7f8"></div>
<div class="a" style="left:1204px;top:629px;width:354px;height:54px;border-radius:4px;background:#f7f7f8"></div>
<div class="t" style="left:487px;top:638px;font-size:14px;line-height:19.5px;color:#1d2125;letter-spacing:0.2px">Edit account login details without changing the lo-<br>gin information</div>
<div class="t" style="left:1215px;top:638px;font-size:14px;line-height:19.5px;color:#1d2125">Changes are saved successfully</div>
<div class="t" style="left:480px;top:697px;font-size:13px;font-weight:bold;line-height:15px;color:#1d2125">Actual Result</div>
<div class="a" style="left:480px;top:725px;width:1075px;height:35px;border-radius:4px;background:#f0f1f2"></div>
<div class="t" style="left:487px;top:734px;font-size:14px;line-height:17px;color:#5b5e64;letter-spacing:0.48px;top:735px">Add an Actual Result...</div>
<div class="t" style="left:480px;top:782px;font-size:13px;font-weight:bold;line-height:15px;color:#1d2125">Comments</div>

<div class="a" style="left:0;top:779px;width:4px;height:17px;background:linear-gradient(to right,#000 0%,rgba(0,0,0,0.6) 40%,rgba(0,0,0,0) 100%);clip-path:polygon(0 0,30% 0,100% 100%,0 100%)"></div>
<div class="a" style="left:1596px;top:775px;width:4px;height:21px;background:#000;clip-path:polygon(100% 0,100% 100%,0 100%,60% 70%)"></div>
</body></html>
